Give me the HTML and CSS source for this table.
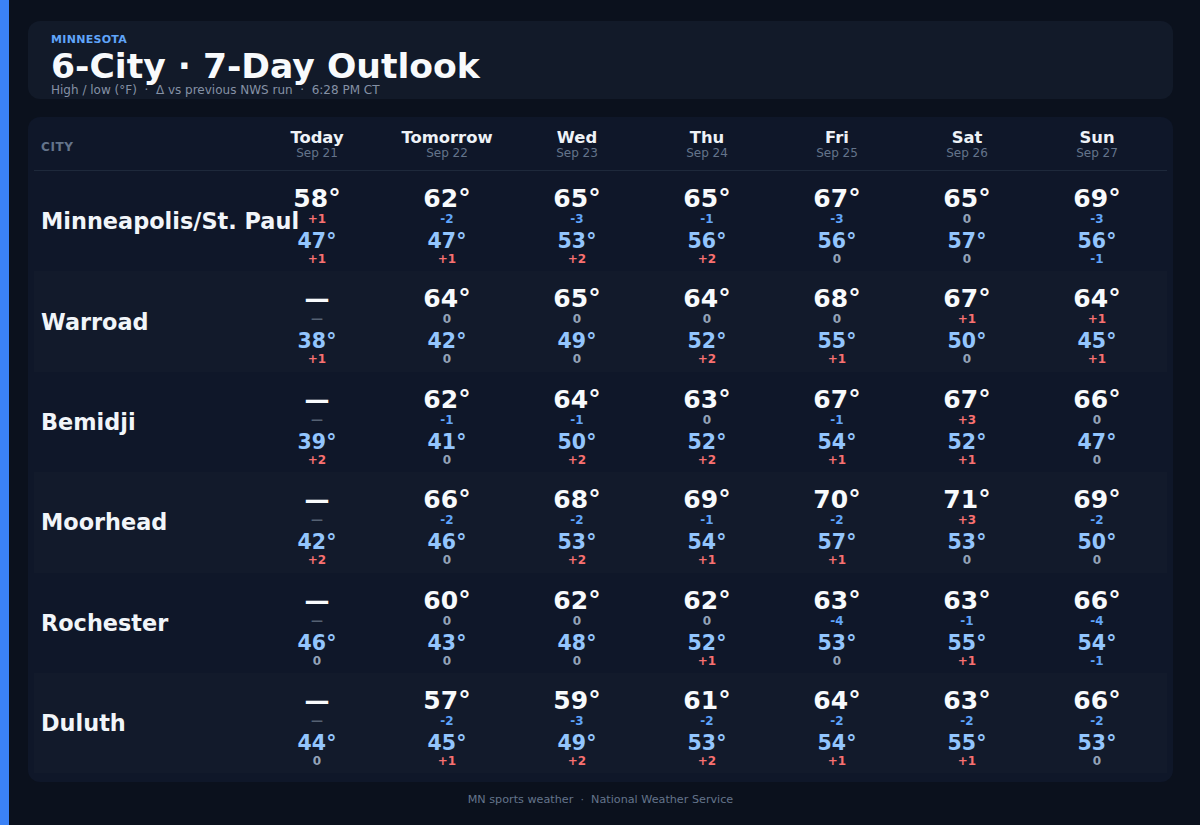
FILE: index.html
```html
<!DOCTYPE html>
<html lang="en">
<head>
<meta charset="utf-8">
<title>6-City · 7-Day Outlook</title>
<link rel="stylesheet" href="styles.css">
</head>
<body>
<main class="page">
  <header class="hero">
    <div class="eyebrow">MINNESOTA</div>
    <h1 class="title">6-City · 7-Day Outlook</h1>
    <div class="sub">High / low (°F) &nbsp;·&nbsp; Δ vs previous NWS run &nbsp;·&nbsp; 6:28 PM CT</div>
  </header>

  <section class="board">
    <div class="head grid">
      <div class="city-label">CITY</div>
      <div class="day"><div class="dname">Today</div><div class="ddate">Sep 21</div></div>
      <div class="day"><div class="dname">Tomorrow</div><div class="ddate">Sep 22</div></div>
      <div class="day"><div class="dname">Wed</div><div class="ddate">Sep 23</div></div>
      <div class="day"><div class="dname">Thu</div><div class="ddate">Sep 24</div></div>
      <div class="day"><div class="dname">Fri</div><div class="ddate">Sep 25</div></div>
      <div class="day"><div class="dname">Sat</div><div class="ddate">Sep 26</div></div>
      <div class="day"><div class="dname">Sun</div><div class="ddate">Sep 27</div></div>
    </div>

    <div class="row grid">
      <div class="city">Minneapolis/St. Paul</div>
      <div class="cell"><div class="hi">58°</div><div class="d up">+1</div><div class="lo">47°</div><div class="d up">+1</div></div>
      <div class="cell"><div class="hi">62°</div><div class="d down">-2</div><div class="lo">47°</div><div class="d up">+1</div></div>
      <div class="cell"><div class="hi">65°</div><div class="d down">-3</div><div class="lo">53°</div><div class="d up">+2</div></div>
      <div class="cell"><div class="hi">65°</div><div class="d down">-1</div><div class="lo">56°</div><div class="d up">+2</div></div>
      <div class="cell"><div class="hi">67°</div><div class="d down">-3</div><div class="lo">56°</div><div class="d zero">0</div></div>
      <div class="cell"><div class="hi">65°</div><div class="d zero">0</div><div class="lo">57°</div><div class="d zero">0</div></div>
      <div class="cell"><div class="hi">69°</div><div class="d down">-3</div><div class="lo">56°</div><div class="d down">-1</div></div>
    </div>

    <div class="row grid alt">
      <div class="city">Warroad</div>
      <div class="cell"><div class="hi">—</div><div class="d none">—</div><div class="lo">38°</div><div class="d up">+1</div></div>
      <div class="cell"><div class="hi">64°</div><div class="d zero">0</div><div class="lo">42°</div><div class="d zero">0</div></div>
      <div class="cell"><div class="hi">65°</div><div class="d zero">0</div><div class="lo">49°</div><div class="d zero">0</div></div>
      <div class="cell"><div class="hi">64°</div><div class="d zero">0</div><div class="lo">52°</div><div class="d up">+2</div></div>
      <div class="cell"><div class="hi">68°</div><div class="d zero">0</div><div class="lo">55°</div><div class="d up">+1</div></div>
      <div class="cell"><div class="hi">67°</div><div class="d up">+1</div><div class="lo">50°</div><div class="d zero">0</div></div>
      <div class="cell"><div class="hi">64°</div><div class="d up">+1</div><div class="lo">45°</div><div class="d up">+1</div></div>
    </div>

    <div class="row grid">
      <div class="city">Bemidji</div>
      <div class="cell"><div class="hi">—</div><div class="d none">—</div><div class="lo">39°</div><div class="d up">+2</div></div>
      <div class="cell"><div class="hi">62°</div><div class="d down">-1</div><div class="lo">41°</div><div class="d zero">0</div></div>
      <div class="cell"><div class="hi">64°</div><div class="d down">-1</div><div class="lo">50°</div><div class="d up">+2</div></div>
      <div class="cell"><div class="hi">63°</div><div class="d zero">0</div><div class="lo">52°</div><div class="d up">+2</div></div>
      <div class="cell"><div class="hi">67°</div><div class="d down">-1</div><div class="lo">54°</div><div class="d up">+1</div></div>
      <div class="cell"><div class="hi">67°</div><div class="d up">+3</div><div class="lo">52°</div><div class="d up">+1</div></div>
      <div class="cell"><div class="hi">66°</div><div class="d zero">0</div><div class="lo">47°</div><div class="d zero">0</div></div>
    </div>

    <div class="row grid alt">
      <div class="city">Moorhead</div>
      <div class="cell"><div class="hi">—</div><div class="d none">—</div><div class="lo">42°</div><div class="d up">+2</div></div>
      <div class="cell"><div class="hi">66°</div><div class="d down">-2</div><div class="lo">46°</div><div class="d zero">0</div></div>
      <div class="cell"><div class="hi">68°</div><div class="d down">-2</div><div class="lo">53°</div><div class="d up">+2</div></div>
      <div class="cell"><div class="hi">69°</div><div class="d down">-1</div><div class="lo">54°</div><div class="d up">+1</div></div>
      <div class="cell"><div class="hi">70°</div><div class="d down">-2</div><div class="lo">57°</div><div class="d up">+1</div></div>
      <div class="cell"><div class="hi">71°</div><div class="d up">+3</div><div class="lo">53°</div><div class="d zero">0</div></div>
      <div class="cell"><div class="hi">69°</div><div class="d down">-2</div><div class="lo">50°</div><div class="d zero">0</div></div>
    </div>

    <div class="row grid">
      <div class="city">Rochester</div>
      <div class="cell"><div class="hi">—</div><div class="d none">—</div><div class="lo">46°</div><div class="d zero">0</div></div>
      <div class="cell"><div class="hi">60°</div><div class="d zero">0</div><div class="lo">43°</div><div class="d zero">0</div></div>
      <div class="cell"><div class="hi">62°</div><div class="d zero">0</div><div class="lo">48°</div><div class="d zero">0</div></div>
      <div class="cell"><div class="hi">62°</div><div class="d zero">0</div><div class="lo">52°</div><div class="d up">+1</div></div>
      <div class="cell"><div class="hi">63°</div><div class="d down">-4</div><div class="lo">53°</div><div class="d zero">0</div></div>
      <div class="cell"><div class="hi">63°</div><div class="d down">-1</div><div class="lo">55°</div><div class="d up">+1</div></div>
      <div class="cell"><div class="hi">66°</div><div class="d down">-4</div><div class="lo">54°</div><div class="d down">-1</div></div>
    </div>

    <div class="row grid alt">
      <div class="city">Duluth</div>
      <div class="cell"><div class="hi">—</div><div class="d none">—</div><div class="lo">44°</div><div class="d zero">0</div></div>
      <div class="cell"><div class="hi">57°</div><div class="d down">-2</div><div class="lo">45°</div><div class="d up">+1</div></div>
      <div class="cell"><div class="hi">59°</div><div class="d down">-3</div><div class="lo">49°</div><div class="d up">+2</div></div>
      <div class="cell"><div class="hi">61°</div><div class="d down">-2</div><div class="lo">53°</div><div class="d up">+2</div></div>
      <div class="cell"><div class="hi">64°</div><div class="d down">-2</div><div class="lo">54°</div><div class="d up">+1</div></div>
      <div class="cell"><div class="hi">63°</div><div class="d down">-2</div><div class="lo">55°</div><div class="d up">+1</div></div>
      <div class="cell"><div class="hi">66°</div><div class="d down">-2</div><div class="lo">53°</div><div class="d zero">0</div></div>
    </div>
  </section>

  <footer class="foot">MN sports weather &nbsp;·&nbsp; National Weather Service</footer>
</main>
</body>
</html>
```

FILE: styles.css
```css
* { box-sizing: border-box; }

html, body { margin: 0; padding: 0; }

body {
  background: #0b111d;
  border-left: 9px solid #3b82f6;
  min-height: 100vh;
  font-family: "DejaVu Sans", "Liberation Sans", sans-serif;
  color: #f1f5f9;
}

.page {
  padding: 21px 27px 0 19px;
}

.hero {
  background: #121a29;
  border-radius: 12px;
  padding: 12px 23px 2px;
  height: 78px;
}

.eyebrow {
  font-size: 11px;
  line-height: 13px;
  font-weight: 700;
  letter-spacing: 0.3px;
  color: #60a5fa;
}

.title {
  margin: 5px 0 0;
  font-size: 34.6px;
  line-height: 31px;
  font-weight: 700;
  color: #f8fafc;
}

.sub {
  margin-top: 1px;
  font-size: 12px;
  line-height: 14px;
  color: #8591a5;
  white-space: nowrap;
}

.board {
  margin-top: 18px;
  background: #0f1729;
  border-radius: 12px;
  padding: 0 6px 9px;
}

.grid {
  display: grid;
  grid-template-columns: 218px repeat(7, 130px);
}

.head {
  padding: 12px 0 9px;
  border-bottom: 1px solid #1e293b;
  align-items: center;
}

.city-label {
  padding-left: 7px;
  font-size: 12px;
  font-weight: 700;
  letter-spacing: 0.6px;
  color: #64748b;
  padding-top: 3px;
}

.day {
  text-align: center;
}

.dname {
  font-size: 16.4px;
  line-height: 17px;
  font-weight: 700;
  color: #eef2f7;
}

.ddate {
  font-size: 12px;
  line-height: 15px;
  color: #64748b;
}

.row {
  height: 100.4px;
  align-items: start;
}

.row.alt {
  background: #121a2b;
}

.city {
  align-self: center;
  padding-left: 7px;
  font-size: 22.4px;
  line-height: 26px;
  font-weight: 700;
  color: #f1f5f9;
  white-space: nowrap;
}

.cell {
  padding-top: 15px;
  text-align: center;
  font-weight: 700;
}

.hi {
  font-size: 25px;
  line-height: 26px;
  color: #f8fafc;
}

.lo {
  margin-top: 4px;
  font-size: 20.5px;
  line-height: 22px;
  color: #93c5fd;
}

.d {
  font-size: 12px;
  line-height: 14px;
}

.up { color: #f87171; }
.down { color: #60a5fa; }
.zero { color: #94a3b8; }
.none { color: #556173; }

.foot {
  margin-top: 11px;
  text-align: center;
  font-size: 11.2px;
  line-height: 13px;
  color: #64748b;
}
```
